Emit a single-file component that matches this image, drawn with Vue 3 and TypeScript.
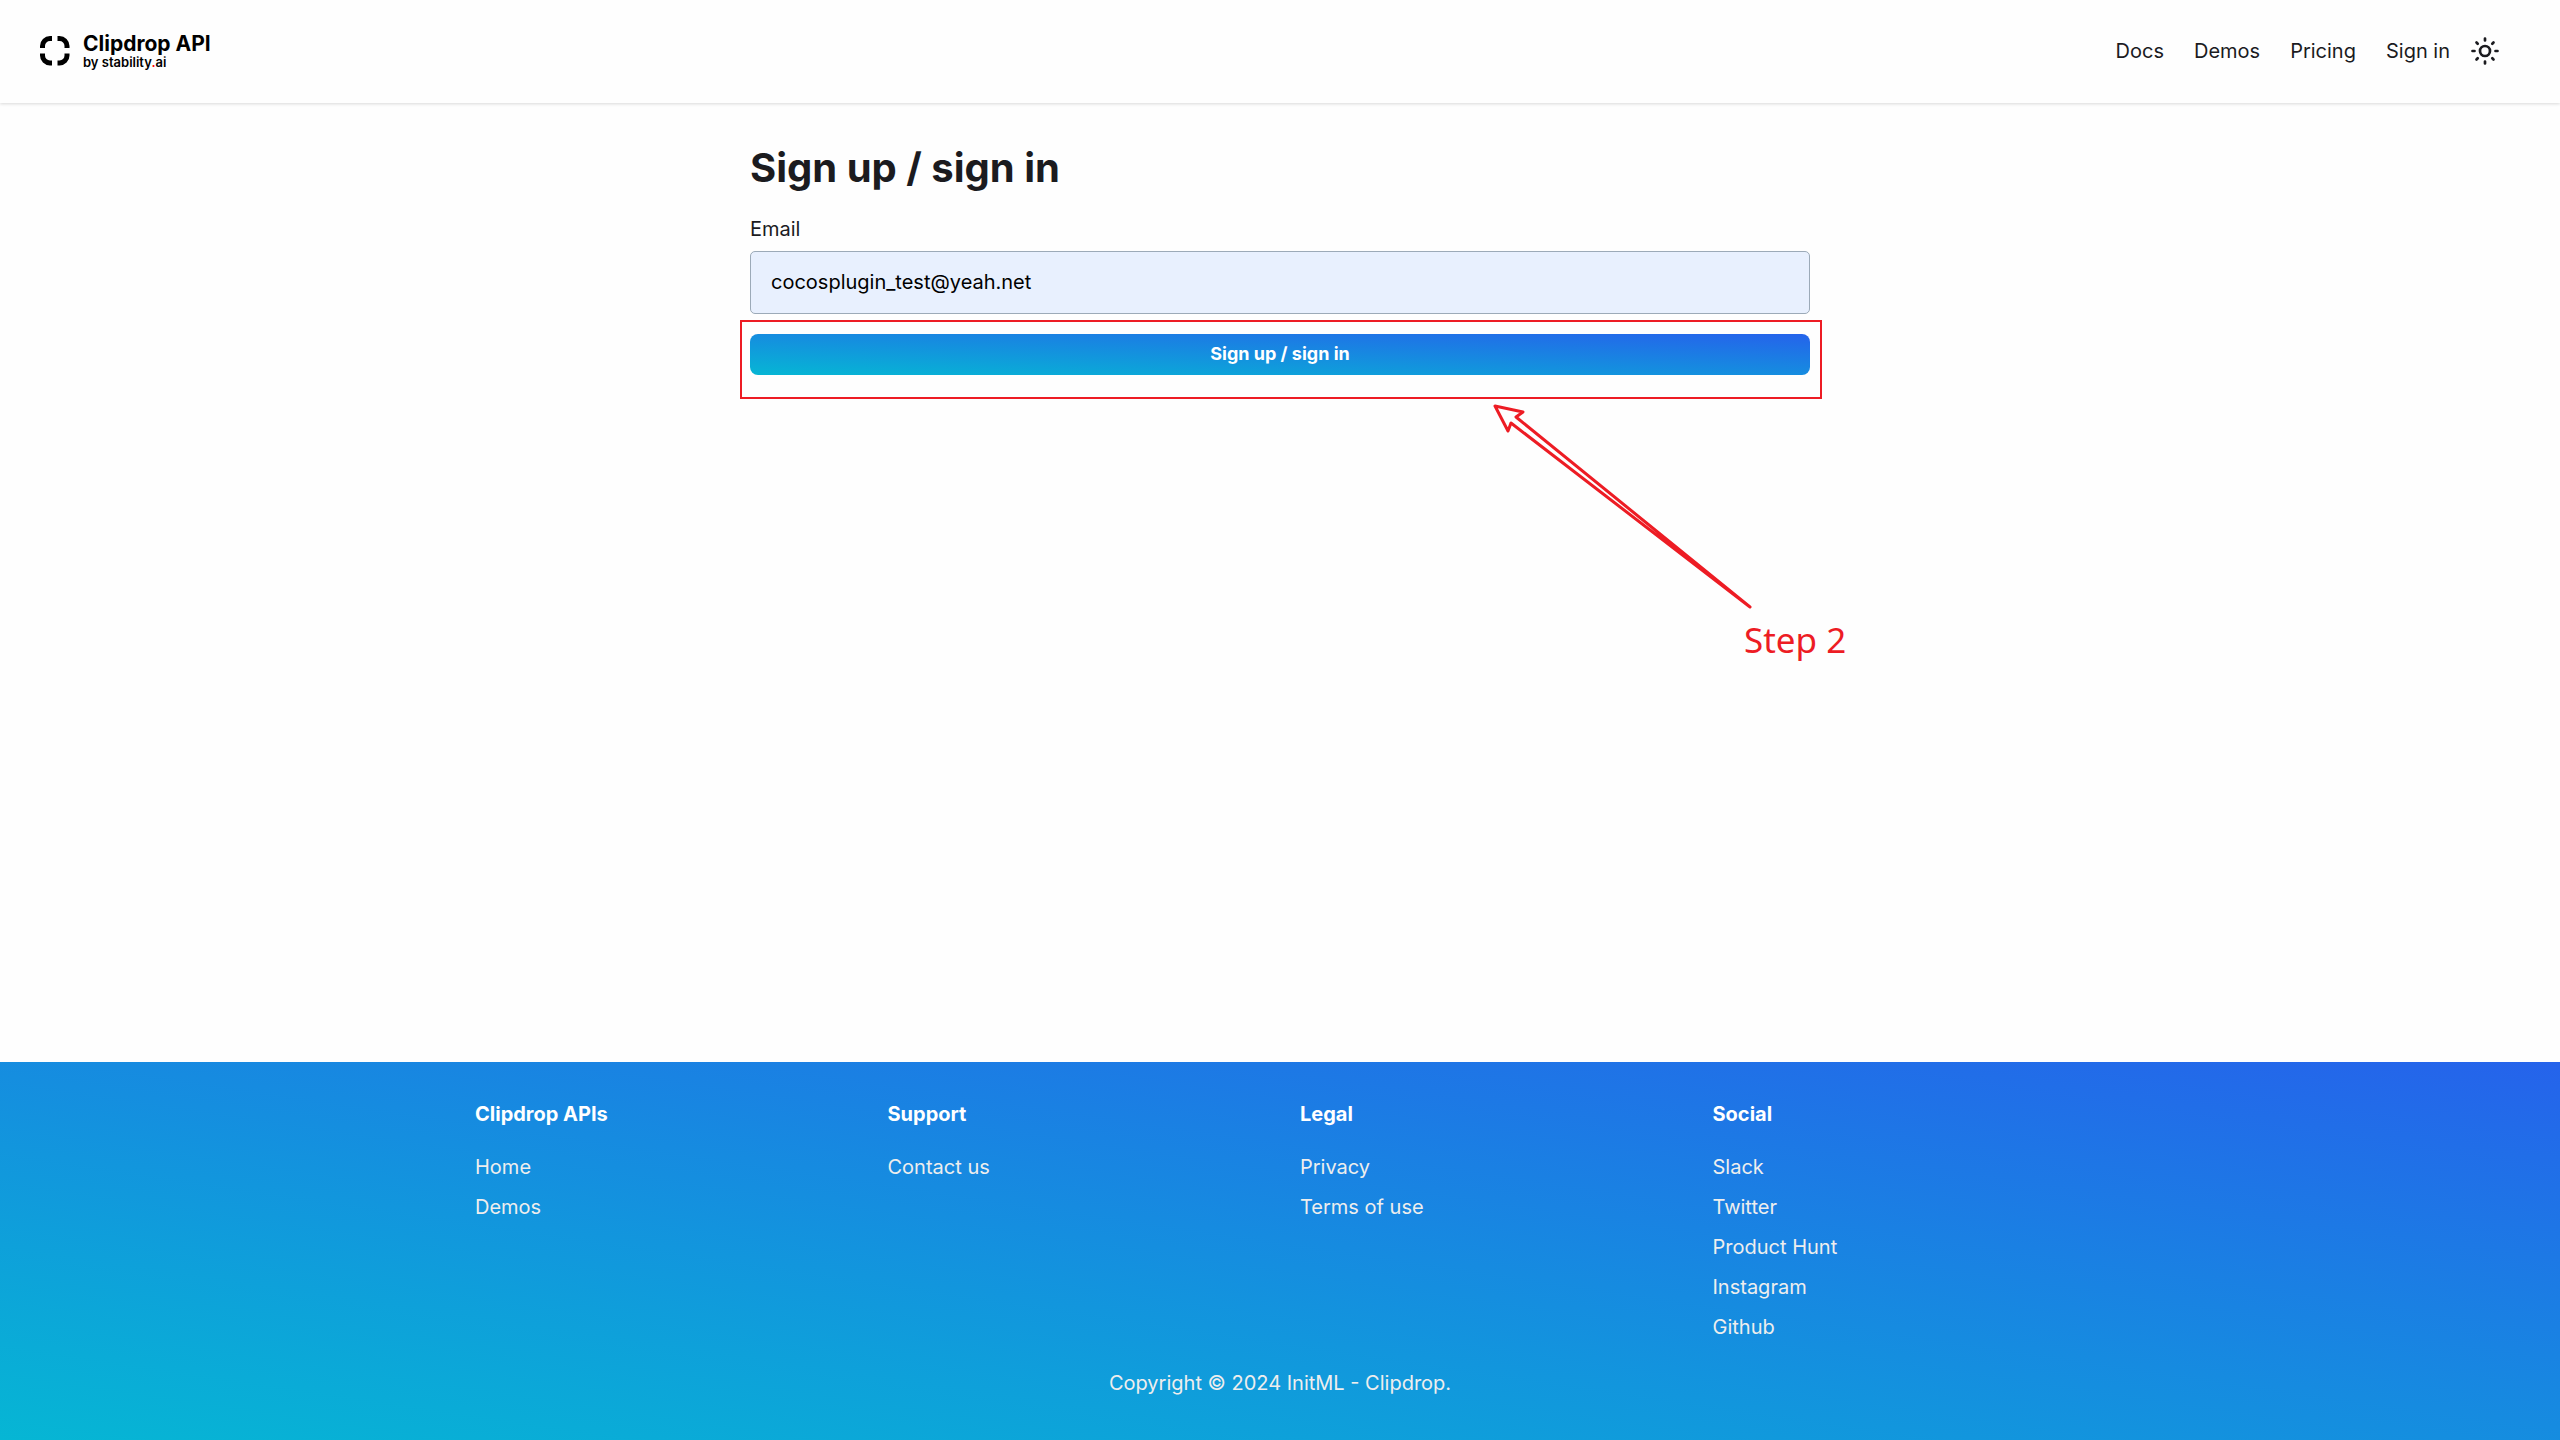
<script setup lang="ts">
interface FooterColumn {
  title: string
  links: string[]
}

const navLinks: string[] = ['Docs', 'Demos', 'Pricing', 'Sign in']

const columns: FooterColumn[] = [
  { title: 'Clipdrop APIs', links: ['Home', 'Demos'] },
  { title: 'Support', links: ['Contact us'] },
  { title: 'Legal', links: ['Privacy', 'Terms of use'] },
  { title: 'Social', links: ['Slack', 'Twitter', 'Product Hunt', 'Instagram', 'Github'] },
]
</script>

<template>
  <div class="page">
    <header class="header">
      <a class="brand" href="#">
        <svg class="brand-mark" viewBox="0 0 30 30" aria-hidden="true">
          <path d="M2.500 12V10A7.500 7.500 0 0 1 10 2.500H12M17.500 2.500H19.500A7.500 7.500 0 0 1 27 10V12M27 17.500V19.500A7.500 7.500 0 0 1 19.500 27H17.500M12 27H10A7.500 7.500 0 0 1 2.500 19.500V17.500" />
        </svg>
        <span class="brand-text">
          <span class="brand-name">Clipdrop API</span>
          <span class="brand-by">by stability<span class="dot">.</span>ai</span>
        </span>
      </a>
      <nav class="nav">
        <a v-for="link in navLinks" :key="link" class="nav-link" href="#">{{ link }}</a>
        <button class="theme" type="button" aria-label="Toggle theme">
          <svg viewBox="0 0 32 32" aria-hidden="true">
            <circle cx="16" cy="16" r="5" />
            <path d="M16 3.500v2M16 26.500v2M3.500 16h2M26.500 16h2M7.500 7.500l1.200 1.200M23.300 23.300l1.200 1.200M7.500 24.500l1.200-1.200M23.300 8.700l1.200-1.200" />
          </svg>
        </button>
      </nav>
    </header>

    <main class="main">
      <form class="form" @submit.prevent>
        <h1 class="title">Sign up / sign in</h1>
        <label class="label" for="email">Email</label>
        <input id="email" class="input" type="email" value="cocosplugin_test@yeah.net" />
        <div class="submit-row">
          <button class="submit" type="submit">Sign up / sign in</button>
          <div class="highlight"></div>
          <svg class="arrow" viewBox="0 0 270 214" aria-hidden="true">
            <path d="M4 5L32 11L25 16L259 206L20 22L17 30Z" />
          </svg>
          <span class="step">Step 2</span>
        </div>
      </form>
    </main>

    <footer class="footer">
      <div class="columns">
        <section v-for="column in columns" :key="column.title" class="column">
          <h2 class="column-title">{{ column.title }}</h2>
          <a v-for="link in column.links" :key="link" class="footer-link" href="#">{{ link }}</a>
        </section>
      </div>
      <p class="copyright">Copyright © 2024 InitML - Clipdrop.</p>
    </footer>
  </div>
</template>

<style>
body {
  margin: 0;
}
</style>

<style scoped>
.page {
  display: flex;
  flex-direction: column;
  min-height: 100vh;
  box-sizing: border-box;
  background: #fefefe;
  color: #1b1b1f;
  font-family: Inter, "Liberation Sans", sans-serif;
  font-size: 20px;
  line-height: 30px;
}

a {
  color: inherit;
  text-decoration: none;
}

.header {
  display: flex;
  align-items: center;
  justify-content: space-between;
  box-sizing: border-box;
  height: 103px;
  padding: 0 59px 2px 40px;
  box-shadow: 0 1px 3px rgba(0, 0, 0, 0.15);
  background: #fefefe;
}

.brand {
  display: flex;
  align-items: center;
  gap: 13px;
  color: #000;
}

.brand-mark {
  width: 30px;
  height: 30px;
  fill: none;
  stroke: currentColor;
  stroke-width: 5;
}

.brand-text {
  display: flex;
  flex-direction: column;
}

.brand-name {
  font-size: 21px;
  font-weight: 700;
  line-height: 22px;
}

.brand-by {
  font-size: 13px;
  font-weight: 600;
  line-height: 14px;
}

.dot {
  color: #f00;
}

.nav {
  display: flex;
  align-items: center;
  gap: 30px;
}

.theme {
  display: flex;
  margin-left: -11px;
  padding: 0;
  border: 0;
  background: none;
  color: inherit;
}

.theme svg {
  width: 32px;
  height: 32px;
  fill: none;
  stroke: currentColor;
  stroke-width: 2.700;
  stroke-linecap: round;
}

.main {
  flex: 1;
  padding: 40px;
}

.form {
  display: flex;
  flex-direction: column;
  max-width: 1060px;
  margin: 0 auto;
}

.title {
  margin: 0 0 21px;
  font-size: 40px;
  font-weight: 700;
  line-height: 50px;
}

.label {
  margin-bottom: 7px;
}

.input {
  box-sizing: border-box;
  height: 63px;
  padding: 0 20px 1px;
  border: 1px solid #9caab8;
  border-radius: 5px;
  background: #e8f0fe;
  color: #000;
  font: inherit;
}

.submit-row {
  position: relative;
  display: flex;
  margin-top: 20px;
}

.submit {
  flex: 1;
  height: 41px;
  padding: 0 0 2px;
  border: 0;
  border-radius: 8px;
  background: linear-gradient(to top right, #06b6d4, #2563eb);
  color: #fff;
  font-family: inherit;
  font-size: 18px;
  font-weight: 700;
}

.highlight {
  position: absolute;
  inset: -14px -12px -24px -10px;
  border: 2px solid #ed1c24;
  pointer-events: none;
}

.arrow {
  position: absolute;
  top: 67px;
  left: 741px;
  width: 270px;
  height: 214px;
  fill: none;
  stroke: #ed1c24;
  stroke-width: 3;
  stroke-linejoin: round;
}

.step {
  position: absolute;
  top: 281px;
  left: 994px;
  color: #ed1c24;
  font-family: "Noto Sans", "Open Sans", sans-serif;
  font-size: 35px;
  line-height: 50px;
  white-space: nowrap;
}

.footer {
  padding: 37px 40px 42px;
  background: linear-gradient(to top right, #06b6d4, #2563eb);
  color: #eee;
}

.columns {
  display: grid;
  grid-template-columns: repeat(4, 1fr);
  gap: 40px;
  max-width: 1610px;
  margin: 0 auto;
}

.column {
  display: flex;
  flex-direction: column;
  align-items: flex-start;
  gap: 10px;
}

.column-title {
  margin: 0 0 13px;
  color: #fff;
  font-size: 20px;
  font-weight: 700;
  line-height: 30px;
}

.copyright {
  margin: 26px 0 0;
  text-align: center;
}
</style>
